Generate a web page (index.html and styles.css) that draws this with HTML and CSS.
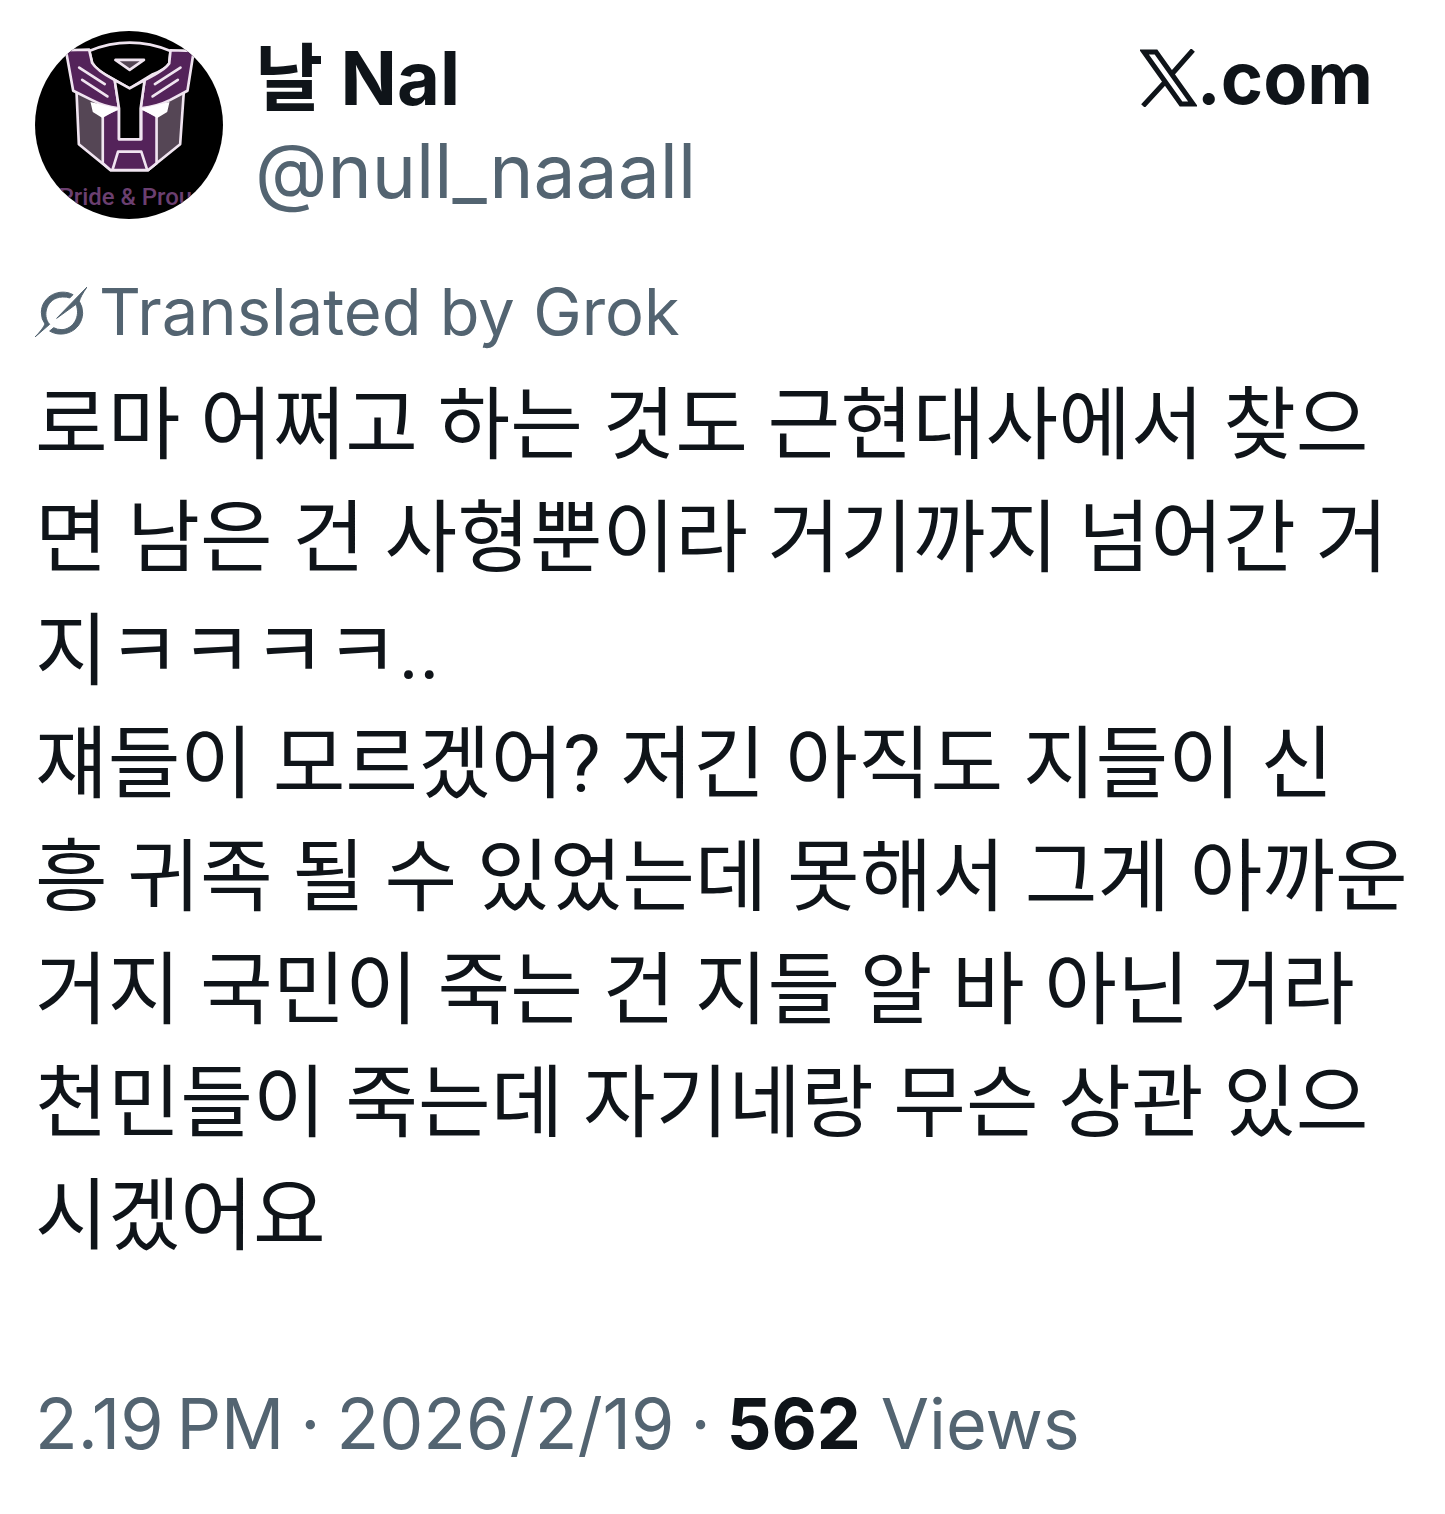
FILE: index.html
```html
<!DOCTYPE html>
<html lang="ko">
<head>
    <meta charset="UTF-8">
    <meta name="viewport" content="width=device-width, initial-scale=1.0">
    <title>날 Nal (@null_naaall)</title>
    <link rel="stylesheet" href="styles.css">
</head>
<body>
    <article class="post">
        <header class="post-header">
            <svg class="avatar" viewBox="30 32 566 566" role="img" aria-label="Avatar">
                <defs>
                    <clipPath id="avatarClip"><circle cx="313" cy="315" r="283"/></clipPath>
                </defs>
                <g clip-path="url(#avatarClip)">
                    <rect x="30" y="32" width="566" height="566" fill="#000"/>
                    <g stroke="#f0e4f0" stroke-width="8" stroke-linejoin="round" stroke-linecap="round">
                        <path d="M155 215 L162 373 L258 451 H370 L467 373 L478 215 L345 265 H285 Z" fill="#554655"/>
                        <path d="M234 285 V430 L258 451 H370 L396 430 V285 L350 265 V358 H283 V265 Z" fill="#54235a"/>
                        <path d="M193 92 Q315 42 438 92 L434 130 Q420 150 385 162 L315 205 L250 168 Q215 150 202 128 Z" fill="#000"/>
                        <path d="M123 90 L193 88 L202 128 Q215 150 270 180 L283 265 Q235 258 202 240 L145 212 Z" fill="#54235a"/>
                        <path d="M508 92 L438 90 L434 130 Q420 150 360 180 L348 265 Q400 258 436 240 L489 212 Z" fill="#54235a"/>
                        <path d="M270 180 L315 205 L360 180 L348 265 V358 H283 V265 Z" fill="#000"/>
                        <path d="M264 448 L280 395 H350 L367 448" fill="none"/>
                        <path d="M272 119 H358 L315 149 Z" fill="#554655"/>
                        <path d="M163 142 L240 192 M172 179 L248 229 M468 142 L391 192 M460 179 L384 229" fill="none"/>
                    </g>
                    <path d="M197 246 L283 266 L233 294 L204 276 Z M435 246 L348 266 L398 294 L428 276 Z" fill="#fff"/>
                    <text class="avatar-text" x="322" y="556" text-anchor="middle">Pride &amp; Proud</text>
                </g>
            </svg>
            <div class="author">
                <span class="name">날 Nal</span>
                <a class="handle" href="#">@null_naaall</a>
            </div>
            <a class="site" href="#" aria-label="X.com">
                <svg class="site-logo" viewBox="0 0 57 58" aria-hidden="true">
                    <path d="M4 3 H16 L53 55 H41 Z M53 1 L31 26 M26 32 L3 57" fill="none" stroke="#0f1419" stroke-width="5"/>
                </svg>
                <span>.com</span>
            </a>
        </header>

        <div class="translated">
            <svg class="grok" viewBox="24 46 156 150" aria-hidden="true">
                <path d="M138 69 C100 48 44 72 43 122 Q43 143 54 157 Q47 173 24 196 L68 158 C44 133 58 78 106 76 Q120 75 128 79 Z"/>
                <path d="M180 46 L89 140 L147 98 C162 135 138 172 105 174 Q90 174 80 168 L68 178 C105 201 164 180 167 125 Q167 105 157 89 Q160 75 180 46 Z"/>
            </svg>
            <span>Translated by Grok</span>
        </div>

        <p class="post-text">로마 어쩌고 하는 것도 근현대사에서 찾으면 남은 건 사형뿐이라 거기까지 넘어간 거지ㅋㅋㅋㅋ..<br>
        쟤들이 모르겠어? 저긴 아직도 지들이 신<br>흥 귀족 될 수 있었는데 못해서 그게 아까운 거지 국민이 죽는 건 지들 알 바 아닌 거라<br>
        천민들이 죽는데 자기네랑 무슨 상관 있으시겠어요</p>

        <footer class="post-footer">
            <time datetime="14:19">2.19&#8239;PM</time>
            <span>·</span>
            <time datetime="2026-02-19">2026/2/19</time>
            <span>·</span>
            <span><strong>562</strong> Views</span>
        </footer>
    </article>
</body>
</html>
```
FILE: styles.css
```css
body {
    margin: 0;
    background-color: #ffffff;
    color: #0f1419;
    font-family: Inter, "Noto Sans CJK KR", sans-serif;
}

a {
    color: inherit;
    text-decoration: none;
}

.post {
    padding: 31px 32px 31px 35px;
}

.post-header {
    display: flex;
    align-items: flex-start;
}

.avatar {
    flex: none;
    width: 188px;
    height: 188px;
    margin-right: 32px;
}

.avatar-text {
    font-family: Roboto, sans-serif;
    font-size: 72px;
    font-weight: 500;
    fill: #6b3f70;
}

.author {
    display: flex;
    flex-direction: column;
}

.name {
    font-size: 74px;
    font-weight: 700;
    line-height: 94px;
}

.handle {
    font-size: 75px;
    line-height: 92px;
    color: #536471;
}

.site {
    display: flex;
    align-items: center;
    margin-left: auto;
    margin-right: 40px;
    font-size: 72px;
    font-weight: 700;
    line-height: 94px;
}

.site-logo {
    width: 57px;
    height: 58px;
}

.translated {
    display: flex;
    align-items: center;
    gap: 12px;
    margin-top: 48px;
    font-size: 65px;
    line-height: 90px;
    color: #536471;
}

.grok {
    width: 52px;
    height: 50px;
    fill: #536471;
    stroke: #536471;
    stroke-width: 3;
}

.post-text {
    margin: 13px 0 0;
    font-family: Roboto, "Noto Sans CJK KR", sans-serif;
    font-size: 79px;
    line-height: 113px;
}

.post-footer {
    display: flex;
    gap: 16px;
    margin-top: 105px;
    font-size: 70px;
    line-height: 90px;
    color: #536471;
}

.post-footer strong {
    color: #0f1419;
}
```
